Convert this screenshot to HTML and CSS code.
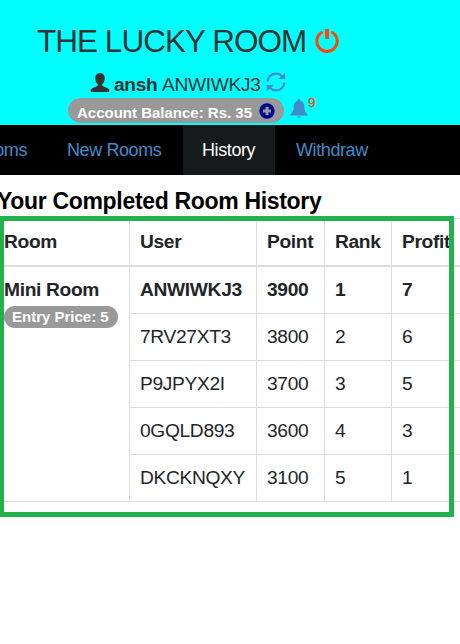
FILE: index.html
```html
<!DOCTYPE html>
<html lang="en">
<head>
<meta charset="utf-8">
<title>The Lucky Room</title>
<link rel="stylesheet" href="styles.css">
</head>
<body>
<header class="header">
  <h1 class="title"><span>THE LUCKY ROOM</span>
    <svg class="power" viewBox="0 0 24 24"><path d="M7.600 3A10.200 10.200 0 1 0 16.400 3" fill="none" stroke="#ff4500" stroke-width="3"/><path d="M10 0h4v10h-4z" fill="#ff4500"/></svg>
  </h1>
  <div class="player">
    <svg class="person" viewBox="0 0 20 20"><path d="M10 0C7 0 5 2.200 5 5.500c0 2.600.9 4.800 2.400 6.200.5.5.5 1.300 0 1.700C6.200 14.500 1 16 .3 17.200V20h19.400v-2.800c-.7-1.200-5.900-2.700-7.100-3.800-.5-.4-.5-1.200 0-1.700C14.100 10.300 15 8.100 15 5.500 15 2.200 13 0 10 0z" fill="#333"/></svg>
    <b class="name">ansh</b><span class="code">ANWIWKJ3</span>
    <svg class="refresh" viewBox="0 0 20 20"><g fill="none" stroke="#428bca" stroke-width="2.200"><path d="M1.600 9.500C1.900 4.700 5.500 1.600 10 1.600c2.600 0 4.800 1.100 6.200 2.600M18.400 10.500c-.3 4.800-3.900 7.900-8.400 7.900-2.600 0-4.800-1.100-6.200-2.600"/></g><path d="M19.200 .8v6.200h-7zM.8 19.200V13h7z" fill="#428bca"/></svg>
  </div>
  <div class="account">
    <div class="balance"><span>Account Balance: Rs. 35</span>
      <svg class="plus" viewBox="0 0 16 16"><circle cx="8" cy="8" r="7.700" fill="#00008b"/><path d="M6.500 4h3v2.500H12v3H9.500V12h-3V9.500H4v-3h2.500z" fill="#999"/></svg>
    </div>
    <svg class="bell" viewBox="0 0 18 20"><path d="M9 0c1 0 1.500.7 1.500 1.700C13.300 2.500 14.400 4.900 14.400 8c0 3.600.9 5.500 3.300 7.400V16.500H.3v-1.100C2.700 13.500 3.600 11.600 3.600 8c0-3.100 1.100-5.500 3.900-6.300C7.500.7 8 0 9 0zM6.800 17.500h4.400L9 19.600z" fill="#428bca"/></svg>
    <span class="alerts">9</span>
  </div>
</header>
<nav class="nav">
  <a class="tab first">Rooms</a><a class="tab rooms">New Rooms</a><a class="tab active">History</a><a class="tab">Withdraw</a>
</nav>
<main class="history">
  <h2 class="heading">Your Completed Room History</h2>
  <div class="table-wrap">
    <table class="table">
      <colgroup><col class="c-room"><col class="c-user"><col class="c-point"><col class="c-rank"><col class="c-profit"></colgroup>
      <thead><tr><th>Room</th><th>User</th><th>Point</th><th>Rank</th><th>Profit</th></tr></thead>
      <tbody>
        <tr class="winner"><td rowspan="5">Mini Room<div class="price">Entry Price: 5</div></td><td>ANWIWKJ3</td><td>3900</td><td>1</td><td>7</td></tr>
        <tr><td>7RV27XT3</td><td>3800</td><td>2</td><td>6</td></tr>
        <tr><td>P9JPYX2I</td><td>3700</td><td>3</td><td>5</td></tr>
        <tr><td>0GQLD893</td><td>3600</td><td>4</td><td>3</td></tr>
        <tr><td>DKCKNQXY</td><td>3100</td><td>5</td><td>1</td></tr>
      </tbody>
    </table>
    <div class="highlight"></div>
  </div>
</main>
</body>
</html>
```

FILE: styles.css
```css
* { box-sizing: border-box; }
body { margin: 0; width: 460px; height: 644px; overflow: hidden; background: #fff; color: #212529; font-family: "Liberation Sans", Arial, sans-serif; font-size: 19.2px; letter-spacing: -0.330px; }
svg { display: block; flex: none; }
.header { height: 125px; padding-top: 23px; background: #0ff; color: #333; }
.title { display: flex; margin: 0 0 0 37px; height: 36px; line-height: 37px; font-size: 31.500px; font-weight: 400; letter-spacing: -0.970px; white-space: nowrap; }
.title span { width: 270px; }
.power { width: 24px; height: 24px; margin: 6px 0 0 8px; }
.player { display: flex; height: 24px; margin: 13px 0 0 90px; line-height: 25px; white-space: nowrap; }
.person { width: 20px; height: 19px; margin: 1px 4px 0 0; }
.name { width: 44px; }
.code { width: 99px; margin-left: 4px; }
.refresh { width: 20px; height: 20px; margin: 0 0 0 5px; }
.account { display: flex; height: 27px; margin: 2px 0 0 68px; }
.balance { display: flex; width: 216px; height: 25px; padding-left: 9px; border-radius: 13px; background: #999; color: #fff; font-size: 15px; font-weight: 700; letter-spacing: 0; line-height: 29px; white-space: nowrap; }
.plus { width: 16px; height: 16px; margin: 5px 0 0 7px; }
.bell { width: 18px; height: 20px; margin: 1px 0 0 6px; }
.alerts { color: #f04a14; font-size: 13.500px; line-height: 9px; -webkit-text-stroke: 0.300px #f04a14; }
.nav { display: flex; height: 50px; background: #000; }
.tab { flex: none; padding: 0 21px; color: #428bca; font-size: 18px; letter-spacing: -0.400px; line-height: 50px; white-space: nowrap; }
.first { width: 97px; margin-left: -50px; padding: 0 20px 0 0; text-align: right; }
.rooms { width: 136px; padding: 0 0 0 20px; }
.active { width: 92px; padding: 0 0 0 19px; background: #151a1b; color: #fff; }
.heading { height: 43px; margin: 0 0 0 -3px; padding-top: 12px; color: #000; font-size: 23px; letter-spacing: -0.320px; line-height: 29px; white-space: nowrap; }
.table-wrap { position: relative; }
.table { width: 530px; margin-left: -7px; border-collapse: separate; border-spacing: 0; table-layout: fixed; border-top: 1px solid #dcdcdc; }
.c-room { width: 137px; } .c-user { width: 127px; } .c-point { width: 68px; } .c-rank { width: 67px; } .c-profit { width: 131px; }
th, td { height: 47px; padding: 0 10px; border: solid #dcdcdc; border-width: 0 1px 1px 0; text-align: left; vertical-align: middle; line-height: 28px; white-space: nowrap; }
th { height: 48px; border-bottom-width: 2px; }
th:first-child, td[rowspan] { padding-left: 11px; }
.winner td { font-weight: 700; }
td[rowspan] { padding-top: 9px; vertical-align: top; }
.price { width: 114px; height: 22px; margin-top: 2px; padding-left: 8px; border-radius: 11px; background: #999; color: #fff; font-size: 15px; letter-spacing: 0; line-height: 22px; }
.highlight { position: absolute; left: -1px; top: -2px; width: 455px; height: 301px; border: 5px solid #22b14c; }
```
